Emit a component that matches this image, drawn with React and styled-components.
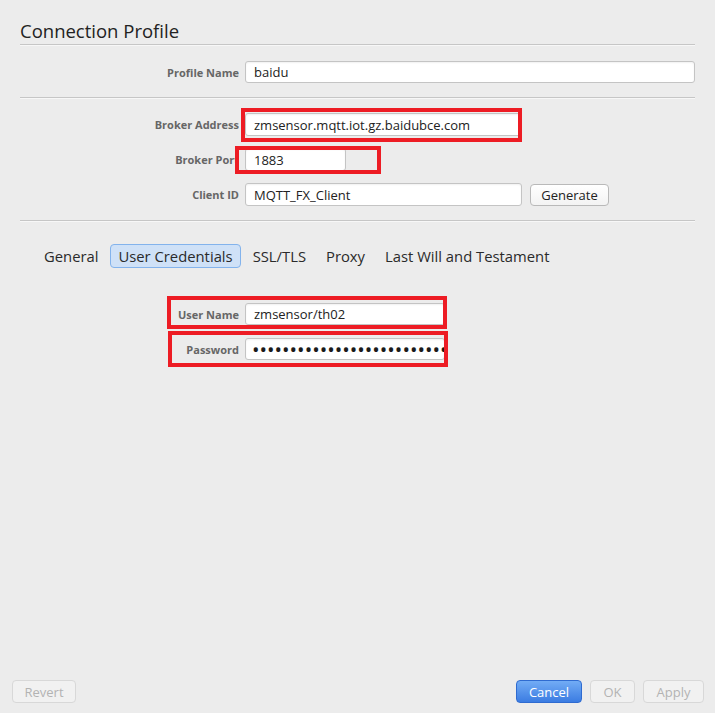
import React from "react";
import styled, { createGlobalStyle } from "styled-components";

const Global = createGlobalStyle`
  html, body { margin: 0; padding: 0; background: #ececec; }
  body { font-family: "Open Sans", "Noto Sans", "Liberation Sans", sans-serif; color: #222; }
  #root { min-height: 713px; }
`;

const Page = styled.div`
  position: relative;
  min-height: 713px;
  display: flex;
  flex-direction: column;
  box-sizing: border-box;
`;

const Content = styled.div`
  padding: 0 20px;
  display: flex;
  flex-direction: column;
`;

const Title = styled.h1`
  margin: 0;
  padding: 19px 0 1px;
  font-size: 18.5px;
  line-height: 24px;
  font-weight: 400;
  color: #222;
  border-bottom: 1px solid #c6c6c6;
  box-shadow: 0 1px 0 #f7f7f7;
`;

const Separator = styled.div`
  height: 1px;
  background: #c6c6c6;
  box-shadow: 0 1px 0 #f7f7f7;
  margin-top: ${(p) => p.$top}px;
`;

const Form = styled.div`
  display: grid;
  grid-template-columns: 219px 1fr;
  column-gap: 6px;
  row-gap: ${(p) => p.$gap}px;
  margin-top: ${(p) => p.$top}px;
  align-items: center;
`;

const Label = styled.label`
  text-align: right;
  font-size: 11px;
  font-weight: 700;
  color: #666;
  white-space: nowrap;
  overflow: hidden;
`;

const FieldRow = styled.div`
  display: flex;
  align-items: center;
  gap: 8px;
`;

const Input = styled.input`
  box-sizing: border-box;
  height: ${(p) => p.$h || 22}px;
  width: ${(p) => (p.$w ? `${p.$w}px` : "100%")};
  border: 1px solid #c4c4c4;
  border-radius: 3px;
  background: #fff;
  box-shadow: inset 0 1px 2px rgba(0, 0, 0, 0.06);
  padding: 0 8px;
  font-family: "Open Sans", "Noto Sans", sans-serif;
  font-size: 13px;
  color: #222;
  outline: none;
  margin: 0;
`;

const PasswordInput = styled(Input)`
  font-size: 20px;
  line-height: 20px;
  letter-spacing: 0;
  padding: 0 0 0 6px;
  color: #1a1a1a;
`;

const Button = styled.button`
  box-sizing: border-box;
  height: ${(p) => p.$h || 23}px;
  width: ${(p) => p.$w}px;
  padding: 0;
  border-radius: 4px;
  font-family: "Open Sans", "Noto Sans", sans-serif;
  font-size: 13px;
  cursor: default;
  border: 1px solid ${(p) => (p.$primary ? "#2f6bd0" : p.$disabled ? "#d8d8d8" : "#b9b9b9")};
  background: ${(p) =>
    p.$primary
      ? "linear-gradient(#72acf5, #3b7ce2)"
      : p.$disabled
      ? "#f1f1f1"
      : "linear-gradient(#ffffff, #f3f3f3)"};
  color: ${(p) => (p.$primary ? "#fff" : p.$disabled ? "#b3b3b3" : "#222")};
`;

const Tabs = styled.div`
  display: flex;
  gap: 4px;
  margin: 23px 0 0 16px;
`;

const Tab = styled.div`
  box-sizing: border-box;
  height: 24px;
  padding: 0 7px;
  display: flex;
  align-items: center;
  font-size: 14.8px;
  color: #2a2a2a;
  border-radius: 4px;
  border: 1px solid ${(p) => (p.$active ? "#83b3ec" : "transparent")};
  background: ${(p) => (p.$active ? "#cfe1f7" : "transparent")};
`;

const Footer = styled.div`
  margin-top: auto;
  display: flex;
  align-items: center;
  justify-content: space-between;
  padding: 0 11px 10px 12px;
`;

const FooterGroup = styled.div`
  display: flex;
  gap: 8px;
`;

const Highlight = styled.div`
  position: absolute;
  box-sizing: border-box;
  border: 4px solid #ed1c24;
  pointer-events: none;
`;

const boxes = [
  { left: 241, top: 108, width: 281, height: 34 },
  { left: 235, top: 146, width: 146, height: 28 },
  { left: 167, top: 296, width: 280, height: 33 },
  { left: 168, top: 331, width: 280, height: 36 },
];

export default function App() {
  return (
    <Page>
      <Global />
      <Content>
        <Title>Connection Profile</Title>
        <Form $top={16} $gap={0}>
          <Label>Profile Name</Label>
          <Input readOnly value="baidu" />
        </Form>
        <Separator $top={14} />
        <Form $top={15} $gap={12}>
          <Label>Broker Address</Label>
          <Input readOnly value="zmsensor.mqtt.iot.gz.baidubce.com" $w={277} $h={23} />
          <Label>Broker Port</Label>
          <Input readOnly value="1883" $w={101} $h={23} />
          <Label>Client ID</Label>
          <FieldRow>
            <Input readOnly value="MQTT_FX_Client" $w={277} $h={23} />
            <Button $w={79} $h={22}>Generate</Button>
          </FieldRow>
        </Form>
        <Separator $top={14} />
        <Tabs>
          <Tab>General</Tab>
          <Tab $active>User Credentials</Tab>
          <Tab>SSL/TLS</Tab>
          <Tab>Proxy</Tab>
          <Tab>Last Will and Testament</Tab>
        </Tabs>
        <Form $top={35} $gap={13}>
          <Label>User Name</Label>
          <Input readOnly value="zmsensor/th02" $w={200} />
          <Label>Password</Label>
          <PasswordInput readOnly value={"•".repeat(30)} $w={200} />
        </Form>
      </Content>
      <Footer>
        <Button $disabled $w={64}>Revert</Button>
        <FooterGroup>
          <Button $primary $w={66}>Cancel</Button>
          <Button $disabled $w={45}>OK</Button>
          <Button $disabled $w={61}>Apply</Button>
        </FooterGroup>
      </Footer>
      {boxes.map((b, i) => (
        <Highlight key={i} style={b} />
      ))}
    </Page>
  );
}
